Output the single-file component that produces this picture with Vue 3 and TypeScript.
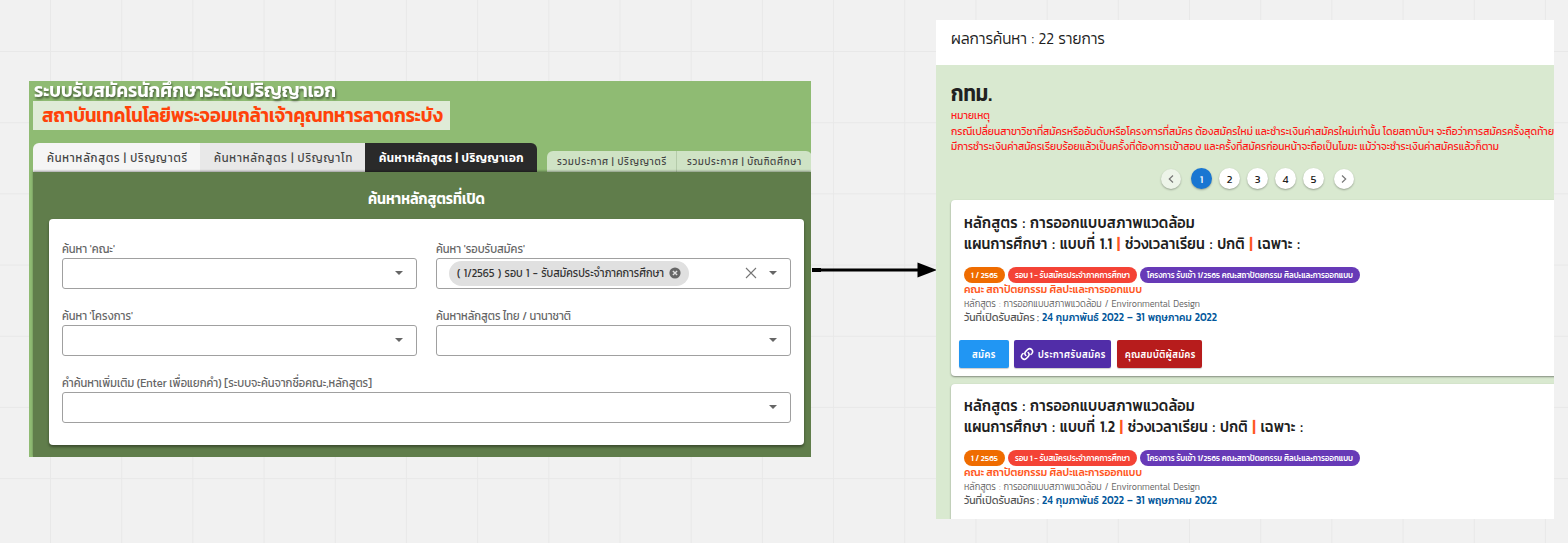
<script setup lang="ts">
import { h, type FunctionalComponent } from 'vue'

interface LineProps { w: number; h: number; b: number }

// One line of text fitted to a fixed width; h is the row height, b the baseline in it.
const Line: FunctionalComponent<LineProps> = (p, { slots }) =>
  h('svg', { class: 'line', width: p.w, height: p.h }, [
    h('text', { x: 0, y: p.b, textLength: p.w, lengthAdjust: 'spacingAndGlyphs' }, slots.default?.()),
  ])
Line.props = ['w', 'h', 'b']

const pages = [1, 2, 3, 4, 5]
const programs = [
  { plan: '1.1', w: 336, cls: 'first', actions: true },
  { plan: '1.2', w: 339, cls: 'second', actions: false },
]
</script>

<template>
  <main class="board">
    <section class="search">
      <Line class="title" :w="302" :h="20" :b="15.5">ระบบรับสมัครนักศึกษาระดับปริญญาเอก</Line>
      <div class="institute"><Line :w="401" :h="29" :b="21">สถาบันเทคโนโลยีพระจอมเกล้าเจ้าคุณทหารลาดกระบัง</Line></div>
      <nav class="tabs">
        <div class="tab t1"><Line :w="141" :h="29" :b="18.5">ค้นหาหลักสูตร | ปริญญาตรี</Line></div>
        <div class="tab t2"><Line :w="139" :h="29" :b="18.5">ค้นหาหลักสูตร | ปริญญาโท</Line></div>
        <div class="tab t3"><Line :w="145" :h="29" :b="18.5">ค้นหาหลักสูตร | ปริญญาเอก</Line></div>
        <div class="tab small t4"><Line :w="110" :h="21" :b="13.5">รวมประกาศ | ปริญญาตรี</Line></div>
        <div class="tab small t5"><Line :w="115" :h="21" :b="13.5">รวมประกาศ | บัณฑิตศึกษา</Line></div>
      </nav>
      <div class="body">
        <div class="heading"><Line :w="117" :h="47" :b="31.500">ค้นหาหลักสูตรที่เปิด</Line></div>
        <div class="form">
          <div class="field">
            <Line :w="53" :h="19" :b="14">ค้นหา 'คณะ'</Line>
            <div class="box"><i class="caret" /></div>
          </div>
          <div class="field">
            <Line :w="89" :h="19" :b="14">ค้นหา 'รอบรับสมัคร'</Line>
            <div class="box">
              <div class="chip">
                <Line :w="207" :h="25" :b="16">( 1/2565 ) รอบ 1 - รับสมัครประจำภาคการศึกษา</Line>
                <svg width="12" height="12" viewBox="0 0 12 12"><circle cx="6" cy="6" r="5.6" fill="#666" /><path d="M3.9 3.9l4.2 4.2M8.1 3.9L3.9 8.1" stroke="#e0e0e0" stroke-width="1.4" /></svg>
              </div>
              <svg class="clear" width="12" height="12" viewBox="0 0 12 12"><path d="M1 1l10 10M11 1L1 11" stroke="#757575" stroke-width="1.1" /></svg>
              <i class="caret" />
            </div>
          </div>
          <div class="field">
            <Line :w="71" :h="19" :b="14">ค้นหา 'โครงการ'</Line>
            <div class="box"><i class="caret" /></div>
          </div>
          <div class="field">
            <Line :w="135" :h="19" :b="14">ค้นหาหลักสูตร ไทย / นานาชาติ</Line>
            <div class="box"><i class="caret" /></div>
          </div>
          <div class="field wide">
            <Line :w="310" :h="19" :b="14">คำค้นหาเพิ่มเติม (Enter เพื่อแยกคำ) [ระบบจะค้นจากชื่อคณะ,หลักสูตร]</Line>
            <div class="box"><i class="caret" /></div>
          </div>
        </div>
      </div>
    </section>

    <svg class="arrow" width="125" height="16" viewBox="0 0 125 16"><path d="M0 8H9" stroke="#000" stroke-width="4" /><path d="M8 8H110" stroke="#000" stroke-width="3.200" /><path d="M105.500 .5L125 8L105.500 15.500Z" /></svg>

    <section class="results">
      <header><Line :w="154" :h="45" :b="23.500">ผลการค้นหา : 22 รายการ</Line></header>
      <div class="list">
        <Line class="region" :w="41" :h="42" :b="36">กทม.</Line>
        <div class="note">
          <Line :w="39" :h="16" :b="12">หมายเหตุ</Line>
          <Line :w="603" :h="15" :b="12">กรณีเปลี่ยนสาขาวิชาที่สมัครหรืออันดับหรือโครงการที่สมัคร ต้องสมัครใหม่ และชำระเงินค่าสมัครใหม่เท่านั้น โดยสถาบันฯ จะถือว่าการสมัครครั้งสุดท้าย</Line>
          <Line :w="548" :h="15" :b="12">มีการชำระเงินค่าสมัครเรียบร้อยแล้วเป็นครั้งที่ต้องการเข้าสอบ และครั้งที่สมัครก่อนหน้าจะถือเป็นโมฆะ แม้ว่าจะชำระเงินค่าสมัครแล้วก็ตาม</Line>
        </div>
        <div class="pager">
          <span class="page step off"><svg width="8" height="10" viewBox="0 0 8 10"><path d="M6 1.500L2.300 5L6 8.500" /></svg></span>
          <span v-for="n in pages" :key="n" class="page" :class="{ on: n === 1 }">{{ n }}</span>
          <span class="page step"><svg width="8" height="10" viewBox="0 0 8 10"><path d="M2 1.500L5.700 5L2 8.500" /></svg></span>
        </div>
        <article v-for="p in programs" :key="p.plan" :class="p.cls">
          <Line class="name" :w="231" :h="20" :b="16">หลักสูตร : การออกแบบสภาพแวดล้อม</Line>
          <Line class="name" :w="p.w" :h="20" :b="16.5">แผนการศึกษา : แบบที่ {{ p.plan }} <tspan class="bar">|</tspan> ช่วงเวลาเรียน : ปกติ <tspan class="bar">|</tspan> เฉพาะ :</Line>
          <div class="tags">
            <span class="tag orange"><Line :w="27" :h="16" :b="10.700">1 / 2565</Line></span>
            <span class="tag red"><Line :w="115" :h="16" :b="10.700">รอบ 1 - รับสมัครประจำภาคการศึกษา</Line></span>
            <span class="tag purple"><Line :w="206" :h="16" :b="10.700">โครงการ รับเข้า 1/2565 คณะสถาปัตยกรรม ศิลปะและการออกแบบ</Line></span>
          </div>
          <Line class="faculty" :w="178" :h="14" :b="10">คณะ สถาปัตยกรรม ศิลปะและการออกแบบ</Line>
          <Line class="course" :w="236" :h="13" :b="9.500">หลักสูตร : การออกแบบสภาพแวดล้อม / Environmental Design</Line>
          <div class="dates">
            <Line :w="75" :h="15" :b="11">วันที่เปิดรับสมัคร :</Line>
            <Line class="range" :w="175" :h="15" :b="11">24 กุมภาพันธ์ 2022 – 31 พฤษภาคม 2022</Line>
          </div>
          <div v-if="p.actions" class="actions">
            <span class="btn apply"><Line :w="24" :h="28" :b="17.500">สมัคร</Line></span>
            <span class="btn announce">
              <svg width="14" height="14" viewBox="0 0 24 24"><g fill="none" stroke="#fff" stroke-width="2.600" stroke-linecap="round"><path d="M10 14.500a5 5 0 0 1 0-7l3.500-3.500a5 5 0 0 1 7 7l-1.800 1.800" /><path d="M14 9.500a5 5 0 0 1 0 7l-3.500 3.500a5 5 0 0 1-7-7l1.800-1.800" /></g></svg>
              <Line :w="68" :h="28" :b="17.500">ประกาศรับสมัคร</Line>
            </span>
            <span class="btn terms"><Line :w="71" :h="28" :b="17.500">คุณสมบัติผู้สมัคร</Line></span>
          </div>
        </article>
      </div>
    </section>
  </main>
</template>

<style>
html, body { margin: 0; overflow: hidden; }
</style>

<style scoped>
* { box-sizing: border-box; }
.board {
  position: relative; width: 1568px; height: 543px; overflow: hidden;
  font-family: Kanit, Prompt, "Noto Sans Thai", "Noto Sans", "Open Sans", sans-serif;
  background-color: #f1f1f1;
  background-image: linear-gradient(90deg, #e8e8e8 1px, transparent 1px), linear-gradient(#e8e8e8 1px, transparent 1px);
  background-size: 71.200px 71.200px;
  background-position: 50px 51px;
}
.line { display: block; flex: none; overflow: visible; fill: currentColor; }
.search { position: absolute; left: 29px; top: 81px; width: 782px; height: 376px; overflow: hidden; background: #8fbb73; padding-left: 4px; }
.title { margin-left: 1px; color: #fff; font-size: 19px; font-weight: 600; filter: drop-shadow(1px 2px 1px rgba(0, 0, 0, .5)); }
.institute { width: 417px; height: 29px; padding-left: 9px; background: #dfebd7; color: #ff4209; font-size: 19.500px; font-weight: 600; }
.tabs { display: flex; align-items: flex-end; height: 42px; width: 800px; }
.tab { height: 29px; display: flex; padding-left: 14px; font-size: 11.800px; letter-spacing: .9px; color: #444; }
.t1 { width: 167px; background: #f5f5f5; border-radius: 6px 0 0; }
.t2 { width: 165px; background: #e8e8e8; }
.t3 { width: 172px; background: #2a2a2a; color: #fff; font-weight: 600; letter-spacing: .5px; border-radius: 0 6px 0 0; }
.small { height: 21px; padding-left: 10px; font-size: 9.800px; letter-spacing: .8px; background: #cfe3c5; }
.t4 { width: 130px; margin-left: 10px; border-radius: 6px 0 0; border-right: 1px solid #b5cbaa; }
.t5 { width: 135px; border-radius: 0 6px 0 0; }
.body { height: 285px; background: #607d4b; box-shadow: 0 -1px 2px rgba(0, 0, 0, .35); padding-left: 16px; position: relative; }
.heading { padding-left: 319px; color: #fff; font-size: 15.500px; font-weight: 600; }
.form { width: 755px; height: 226px; padding: 20px 13px; border-radius: 4px; background: #fff; box-shadow: 0 2px 3px rgba(0, 0, 0, .4); display: grid; grid-template-columns: 355px 355px; grid-auto-rows: 67px; column-gap: 19px; color: #666; font-size: 11.800px; }
.wide { grid-column: 1 / 3; }
.box { height: 31px; border: 1px solid #a0a0a0; border-radius: 3px; display: flex; align-items: center; justify-content: flex-end; padding-right: 13px; padding-bottom: 1px; }
.caret { border: 4px solid transparent; border-top-color: #666; border-bottom: 0; }
.chip { width: 240px; height: 25px; border-radius: 13px; background: #e0e0e0; margin-right: 56px; padding: 0 8px; display: flex; align-items: center; gap: 5px; color: #333; word-spacing: 1px; }
.clear { margin-right: 12px; }
.arrow { position: absolute; left: 812px; top: 262px; }
.results { position: absolute; left: 936px; top: 20px; width: 618px; height: 499px; overflow: hidden; background: #d9e9d0; color: #212121; }
.results header { height: 45px; padding-left: 15px; background: #fff; font-size: 16px; font-weight: 300; word-spacing: 1px; }
.list { padding-left: 15px; }
.region { font-size: 23px; font-weight: 600; }
.note { color: #ff1a1a; font-size: 10.500px; }
.pager { display: flex; align-items: center; height: 47px; padding: 4px 0 0 210px; gap: 7px; }
.page { width: 21px; height: 21px; border-radius: 50%; background: #fff; display: flex; align-items: center; justify-content: center; font-size: 11px; box-shadow: 0 1px 2px rgba(0, 0, 0, .3); }
.page svg { fill: none; stroke: #777; stroke-width: 1.200; }
.step { width: 20px; height: 20px; margin-left: 3px; }
.off { margin: 0 3px 0 0; background: #edf4e9; }
.on { background: #1976d2; color: #fff; }
article { width: 640px; height: 176px; margin-bottom: 8px; padding: 12px 13px 0; border-radius: 4px; background: #fff; box-shadow: 0 1px 2px rgba(0, 0, 0, .4); }
article.second { padding-top: 11px; }
.name { font-size: 15.500px; font-weight: 500; letter-spacing: .2px; word-spacing: 1.500px; }
.bar { fill: #ff5722; font-weight: 600; }
.tags { display: flex; gap: 3px; padding-top: 15px; }
.tag { height: 16px; padding: 0 7px; border-radius: 8px; color: #fff; font-size: 9px; font-weight: 500; }
.orange { background: #ef6c00; }
.red { background: #f44336; }
.purple { background: #673ab7; }
.faculty { color: #ff5722; font-size: 11.500px; font-weight: 500; }
.course { color: #666; font-size: 9.800px; font-weight: 300; word-spacing: 1px; }
.dates { display: flex; gap: 3px; color: #555; font-size: 11.500px; }
.range { color: #01579b; font-weight: 500; word-spacing: 1px; }
.actions { display: flex; margin: 15px 0 0 -5px; }
.btn { height: 28px; border-radius: 2px; display: flex; align-items: center; color: #fff; font-size: 10px; font-weight: 500; letter-spacing: .6px; box-shadow: 0 1px 1px rgba(0, 0, 0, .2); }
.apply { width: 50px; background: #2196f3; padding-left: 13px; margin-right: 5px; }
.announce { width: 97px; background: #512da8; padding-left: 6px; gap: 4px; margin-right: 6px; }
.terms { width: 85px; background: #b71c1c; padding-left: 8px; }
</style>
